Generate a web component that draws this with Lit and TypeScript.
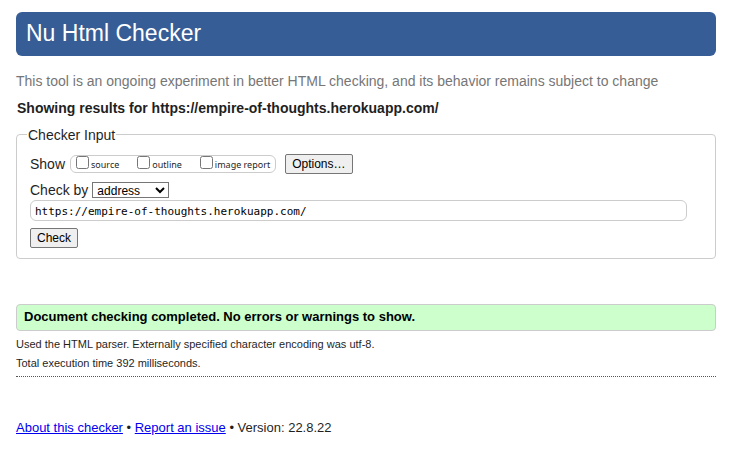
import { LitElement, html, css } from "lit";
import { customElement, state } from "lit/decorators.js";

@customElement("app-root")
export class AppRoot extends LitElement {
  static styles = css`
    :host {
      display: block;
      box-sizing: border-box;
      padding: 12px 16px;
      color: #1f1f1f;
      background: #fff;
      font-family: "Liberation Sans", Arial, sans-serif;
      font-size: 14px;
      line-height: 20px;
    }
    * {
      box-sizing: border-box;
    }
    h1 {
      margin: 0;
      padding: 5px 10px 7px;
      border-radius: 6px;
      background: #365d95;
      color: #fff;
      font-size: 23px;
      font-weight: 400;
      line-height: 32px;
    }
    .tagline {
      margin: 15px 0 0;
      color: #767676;
    }
    h2 {
      margin: 7px 0 0;
      padding-left: 1px;
      font-size: 14px;
      line-height: 20px;
    }
    fieldset {
      min-width: 0;
      margin: 6px 0 0;
      padding: 10px 28px 10px 13px;
      border: 1px solid #ccc;
      border-radius: 4px;
    }
    legend {
      margin-left: -3px;
      padding: 2px 1px 0;
      line-height: 18px;
    }
    .row {
      display: flex;
      align-items: center;
    }
    .group {
      display: flex;
      gap: 18px;
      height: 18px;
      margin: 0 9px 0 5px;
      padding: 0 5px;
      border: 1px solid #ccc;
      border-radius: 6px;
    }
    .option {
      display: flex;
      gap: 2px;
      font-family: "Noto Sans", sans-serif;
      font-size: 9px;
      line-height: 18px;
    }
    .option input {
      width: 13px;
      height: 13px;
      margin: 0;
    }
    button,
    select {
      border: 1px solid #767676;
      background: #efefef;
      color: #000;
      font-family: inherit;
      font-size: 12px;
    }
    button {
      display: block;
      height: 20px;
      padding: 0 6px;
      border-radius: 2px;
      line-height: 18px;
    }
    .by {
      gap: 4px;
      margin-top: 6px;
    }
    select {
      width: 77px;
      height: 16px;
      padding: 0;
      border-radius: 0;
      background: #fff;
    }
    .address {
      display: block;
      width: 100%;
      height: 21px;
      margin: 0 0 7px;
      padding: 1px 4px 0;
      border: 1px solid #ccc;
      border-radius: 6px;
      color: #000;
      font-family: "DejaVu Sans Mono", monospace;
      font-size: 11px;
    }
    .success {
      margin: 45px 0 0;
      padding: 1px 7px 3px;
      border: 1px solid #ccc;
      border-radius: 4px;
      background: #cfc;
      color: #000;
      font-size: 13px;
      font-weight: 700;
      line-height: 21px;
    }
    .details {
      padding: 4px 0 3px;
      border-bottom: 1px dotted #555;
      font-size: 11px;
      line-height: 19px;
    }
    .details p {
      margin: 0;
    }
    footer {
      margin-top: 41px;
      font-size: 13px;
    }
    a {
      color: #00e;
    }
  `;

  @state() private address = "https://empire-of-thoughts.herokuapp.com/";

  render() {
    return html`
      <h1>Nu Html Checker</h1>
      <p class="tagline">
        This tool is an ongoing experiment in better HTML checking, and its behavior remains subject to change
      </p>
      <h2>Showing results for ${this.address}</h2>
      <form @submit=${(e: Event) => e.preventDefault()}>
        <fieldset>
          <legend>Checker Input</legend>
          <div class="row">
            <span id="show">Show</span>
            <div class="group" role="group" aria-labelledby="show">
              ${["source", "outline", "image report"].map(
                (name) => html`<label class="option"><input type="checkbox" />${name}</label>`
              )}
            </div>
            <button type="button">Options…</button>
          </div>
          <div class="row by">
            <label for="method">Check by</label>
            <select id="method">
              <option>address</option>
              <option>file upload</option>
              <option>text input</option>
            </select>
          </div>
          <input class="address" aria-label="Address" .value=${this.address} />
          <button type="submit">Check</button>
        </fieldset>
      </form>
      <p class="success">Document checking completed. No errors or warnings to show.</p>
      <div class="details">
        <p>Used the HTML parser. Externally specified character encoding was utf-8.</p>
        <p>Total execution time 392 milliseconds.</p>
      </div>
      <footer>
        <a href="#about">About this checker</a> • <a href="#issue">Report an issue</a> • Version: 22.8.22
      </footer>
    `;
  }
}
